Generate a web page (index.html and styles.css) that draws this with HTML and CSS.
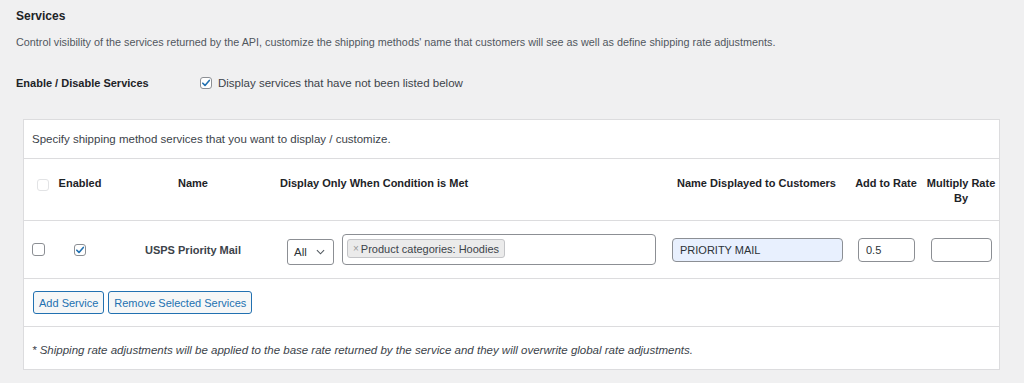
FILE: index.html
```html
<!DOCTYPE html>
<html lang="en">
<head>
    <meta charset="UTF-8">
    <title>Services</title>
    <link rel="stylesheet" href="styles.css">
</head>
<body>
<div class="page">
    <h2 class="title">Services</h2>
    <p class="desc">Control visibility of the services returned by the API, customize the shipping methods' name that customers will see as well as define shipping rate adjustments.</p>

    <div class="option-row">
        <span class="option-label">Enable / Disable Services</span>
        <label class="option-field">
            <span class="cb"><svg viewBox="0 0 12 12" width="12" height="12"><path d="M2.8 6.2 L5 8.4 L9.3 3.4" fill="none" stroke="#2271b1" stroke-width="1.6" stroke-linecap="round" stroke-linejoin="round"/></svg></span>
            Display services that have not been listed below
        </label>
    </div>

    <div class="services-box">
        <table class="services">
            <colgroup>
                <col style="width:28px">
                <col style="width:56px">
                <col style="width:170px">
                <col style="width:386px">
                <col style="width:185px">
                <col style="width:74px">
                <col style="width:76px">
            </colgroup>
            <thead>
                <tr class="intro">
                    <td colspan="7">Specify shipping method services that you want to display / customize.</td>
                </tr>
                <tr class="heads">
                    <th class="head-check"><span class="cb cb-faint"></span></th>
                    <th>Enabled</th>
                    <th>Name</th>
                    <th class="head-left">Display Only When Condition is Met</th>
                    <th>Name Displayed to Customers</th>
                    <th>Add to Rate</th>
                    <th>Multiply Rate By</th>
                </tr>
            </thead>
            <tbody>
                <tr class="service">
                    <td class="cell-select"><span class="cb cb-big"></span></td>
                    <td class="cell-center"><span class="cb"><svg viewBox="0 0 12 12" width="12" height="12"><path d="M2.8 6.2 L5 8.4 L9.3 3.4" fill="none" stroke="#2271b1" stroke-width="1.6" stroke-linecap="round" stroke-linejoin="round"/></svg></span></td>
                    <td class="cell-name">USPS Priority Mail</td>
                    <td class="cell-cond">
                        <div class="cond">
                            <div class="select">All <svg viewBox="0 0 10 6" width="9" height="6"><path d="M1 1 L5 5 L9 1" fill="none" stroke="#50575e" stroke-width="1.2"/></svg></div>
                            <div class="multi">
                                <span class="tag"><span class="tag-x">×</span>Product categories: Hoodies</span>
                            </div>
                        </div>
                    </td>
                    <td class="cell-label"><input class="field field-filled" type="text" value="PRIORITY MAIL"></td>
                    <td class="cell-add"><input class="field" type="text" value="0.5"></td>
                    <td class="cell-mult"><input class="field" type="text" value=""></td>
                </tr>
            </tbody>
            <tfoot>
                <tr class="actions">
                    <td colspan="7">
                        <div class="buttons">
                            <button class="btn" type="button">Add Service</button>
                            <button class="btn" type="button">Remove Selected Services</button>
                        </div>
                    </td>
                </tr>
                <tr class="note">
                    <td colspan="7">* Shipping rate adjustments will be applied to the base rate returned by the service and they will overwrite global rate adjustments.</td>
                </tr>
            </tfoot>
        </table>
    </div>
</div>
</body>
</html>
```

FILE: styles.css
```css
body {
    margin: 0;
    background: #f0f0f1;
    font-family: "Liberation Sans", Arial, sans-serif;
    font-size: 11.5px;
    color: #3c434a;
}
.page { padding: 8px 16px; }
.title {
    margin: 0;
    font-size: 12px;
    line-height: 16px;
    color: #1d2327;
}
.desc { margin: 10px 0 0; font-size: 10.8px; line-height: 16px; color: #50575e; }

.option-row { display: flex; align-items: center; height: 16px; margin-top: 25px; }
.option-label { width: 184px; font-weight: 700; font-size: 11px; color: #1d2327; }
.option-field { display: flex; align-items: center; gap: 6px; }

/* fake checkboxes */
.cb {
    display: inline-block;
    width: 12px;
    height: 12px;
    box-sizing: border-box;
    border: 1px solid #8c8f94;
    border-radius: 3px;
    background: #fff;
    vertical-align: middle;
}
.cb svg { display: block; margin: -1px; }
.cb-big { width: 13px; height: 13px; }
.cb-faint { border-color: #e2e3e5; }

.services-box {
    width: 977px;
    box-sizing: border-box;
    margin: 28px 0 0 7px;
    border: 1px solid #dcdcde;
    background: #fff;
}
.services { width: 100%; border-spacing: 0; table-layout: fixed; }
.services td, .services th { padding: 0; box-sizing: border-box; }

.intro td { height: 38px; padding-left: 8px; line-height: 16px; }

.heads th {
    height: 62px;
    border-top: 1px solid #dcdcde;
    padding-top: 17px;
    vertical-align: top;
    font-size: 11px;
    line-height: 15px;
    color: #1d2327;
    text-align: center;
}
.heads .head-left { text-align: left; padding-left: 2px; }
.heads .head-check { text-align: left; padding: 18px 0 0 13px; }

.service td { height: 58px; border-top: 1px solid #dcdcde; vertical-align: middle; }
.cell-select { padding-left: 8px !important; }
.cell-center { text-align: center; }
.cell-name { text-align: center; font-weight: 700; font-size: 11px; }
.cell-cond { padding-left: 9px !important; }
.cell-label { padding-left: 8px !important; }
.cell-add { padding-left: 9px !important; }
.cell-mult { padding-left: 8px !important; }

.cond { display: flex; align-items: flex-end; gap: 8px; }
.select {
    width: 47px;
    height: 26px;
    box-sizing: border-box;
    border: 1px solid #8c8f94;
    border-radius: 3px;
    padding: 0 8px 0 6px;
    display: flex;
    align-items: center;
    justify-content: space-between;
    color: #2c3338;
}
.multi {
    width: 314px;
    height: 31px;
    box-sizing: border-box;
    border: 1px solid #8c8f94;
    border-radius: 4px;
    padding: 4px;
}
.tag {
    display: inline-flex;
    align-items: center;
    height: 19px;
    box-sizing: border-box;
    padding: 0 5px 0 5px;
    border: 1px solid #c3c4c7;
    border-radius: 3px;
    background: #ebebeb;
    font-size: 11px;
    color: #3c434a;
}
.tag-x { color: #999; font-size: 10px; margin-right: 2px; }

.field {
    display: block;
    height: 24px;
    box-sizing: border-box;
    border: 1px solid #8c8f94;
    border-radius: 4px;
    padding: 0 7px;
    font-family: inherit;
    font-size: 11px;
    color: #2c3338;
    background: #fff;
}
.field-filled { width: 171px; background: #e8f0fe; }
.cell-add .field { width: 57px; }
.cell-mult .field { width: 61px; }

.actions td { height: 48px; border-top: 1px solid #dcdcde; padding-left: 9px; vertical-align: middle; }
.buttons { display: flex; gap: 4px; }
.btn {
    height: 23px;
    padding: 0 5px;
    border: 1px solid #2271b1;
    border-radius: 3px;
    background: #f6f7f7;
    color: #2271b1;
    font-family: inherit;
    font-size: 11px;
}

.note td {
    height: 43px;
    border-top: 1px solid #dcdcde;
    padding: 15px 0 0 8px;
    vertical-align: top;
    line-height: 16px;
    font-style: italic;
}
```
